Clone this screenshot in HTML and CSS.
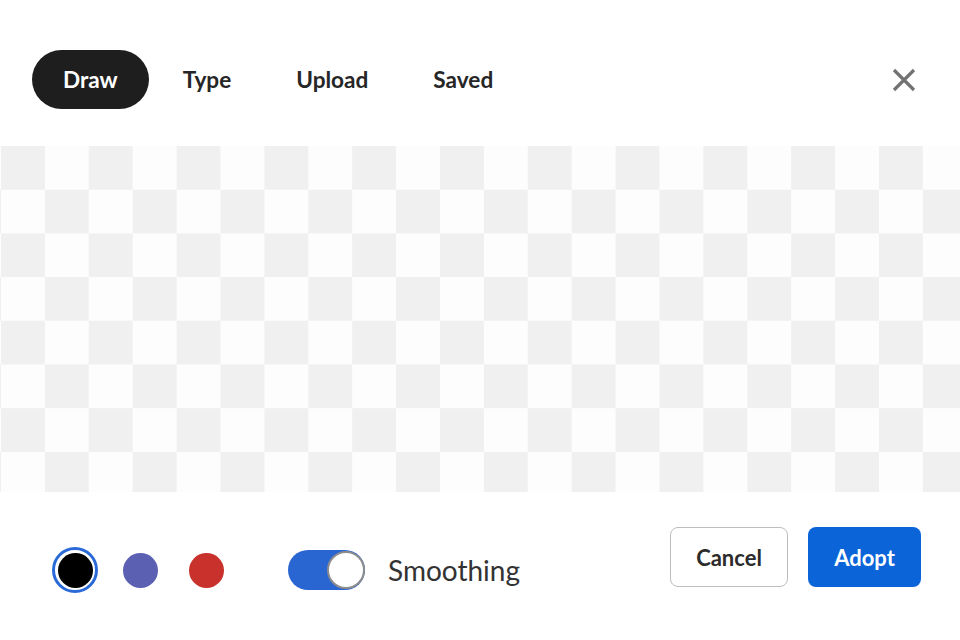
FILE: index.html
```html
<!DOCTYPE html>
<html lang="en">
<head>
<meta charset="utf-8">
<title>Signature</title>
<link rel="stylesheet" href="styles.css">
</head>
<body>
<div class="dialog">
  <header class="header">
    <nav class="tabs">
      <button class="tab active">Draw</button>
      <button class="tab">Type</button>
      <button class="tab">Upload</button>
      <button class="tab">Saved</button>
    </nav>
    <button class="close" aria-label="Close">
      <svg width="24" height="24" viewBox="0 0 24 24"><path d="M2 2 L22 22 M22 2 L2 22" stroke="#737373" stroke-width="3.2" stroke-linecap="butt" fill="none"/></svg>
    </button>
  </header>
  <div class="canvas"></div>
  <footer class="footer">
    <div class="tools">
      <div class="swatches">
        <span class="swatch selected"><span class="dot black"></span></span>
        <span class="swatch"><span class="dot purple"></span></span>
        <span class="swatch"><span class="dot red"></span></span>
      </div>
      <span class="toggle"><span class="knob"></span></span>
      <span class="label">Smoothing</span>
    </div>
    <div class="actions">
      <button class="btn cancel">Cancel</button>
      <button class="btn adopt">Adopt</button>
    </div>
  </footer>
</div>
</body>
</html>
```
FILE: styles.css
```css
* { box-sizing: border-box; }
html, body { margin: 0; padding: 0; background: #fff; }
body { font-family: Lato, "Open Sans", sans-serif; width: 960px; height: 640px; overflow: hidden; }
button { font-family: inherit; cursor: pointer; }

.dialog { display: flex; flex-direction: column; }

.header {
  display: flex; align-items: center; justify-content: space-between;
  padding: 50px 44px 0 32px; height: 109px;
}
.tabs { display: flex; gap: 3px; height: 59px; }
.tab {
  border: 0; background: transparent; color: #262626;
  font-size: 22.6px; font-weight: 700; padding: 0 31px; height: 59px;
  border-radius: 30px; display: flex; align-items: center;
}
.tab.active { background: #1e1e1e; color: #fff; }
.close { border: 0; background: transparent; padding: 0; width: 24px; height: 24px; display: flex; }

.canvas {
  margin-top: 37px; height: 346px;
  background: repeating-conic-gradient(#fdfdfd 0 25%, #f0f0f0 0 50%) 1px 0 / 87.8px 87.4px;
}

.footer {
  display: flex; justify-content: space-between; align-items: flex-start;
  padding: 35px 39px 0 52px;
}
.tools { display: flex; align-items: center; margin-top: 20px; height: 46px; }
.swatches { display: flex; gap: 19.5px; }
.swatch {
  width: 46px; height: 46px; border-radius: 50%;
  display: flex; align-items: center; justify-content: center;
}
.swatch.selected { border: 3px solid #2a6ad8; }
.dot { width: 35px; height: 35px; border-radius: 50%; display: block; }
.black { background: #000; }
.purple { background: #5c60b3; }
.red { background: #c9322c; }

.toggle {
  position: relative; margin-left: 59px;
  width: 77px; height: 40px; border-radius: 20px; background: #2a66d2;
}
.knob {
  position: absolute; right: 0; top: 1px; width: 38px; height: 38px;
  border-radius: 50%; background: #fff; border: 2px solid #8c8c8c;
}
.label { margin-left: 23px; font-size: 28px; color: #333; }

.actions { display: flex; gap: 20px; }
.btn {
  height: 60px; border-radius: 8px; font-size: 22px; font-weight: 700;
  padding: 0 26px; display: flex; align-items: center;
}
.cancel { background: #fff; border: 1px solid #bdbdbd; color: #2b2b2b; width: 118px; justify-content: center; }
.adopt { background: #0b65d9; border: 0; color: #fff; width: 113px; justify-content: center; }
```
